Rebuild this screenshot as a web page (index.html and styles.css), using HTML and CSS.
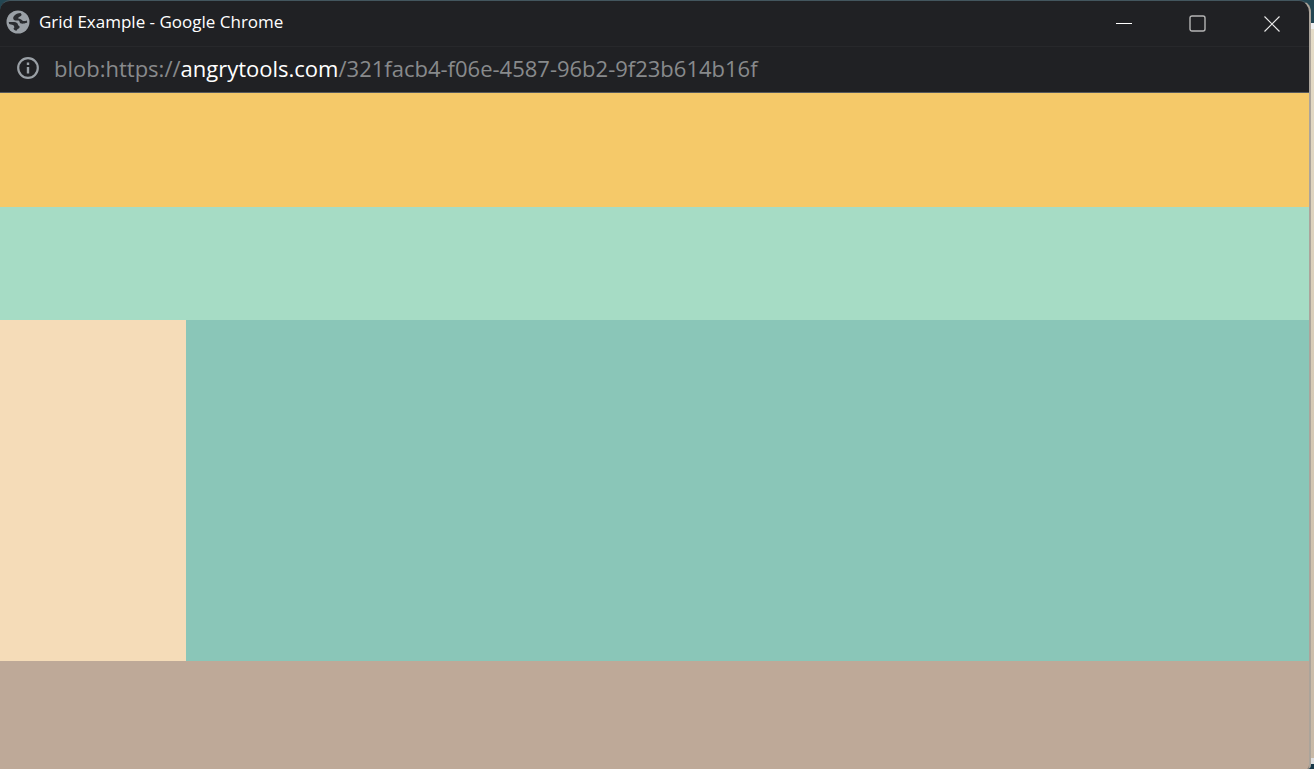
FILE: index.html
```html
<!DOCTYPE html>
<html lang="en">
<head>
<meta charset="utf-8">
<title>Grid Example</title>
<link rel="stylesheet" href="styles.css">
</head>
<body class="desktop">
<div class="window">
  <header class="titlebar">
    <svg class="favicon" viewBox="0 0 24 24" aria-hidden="true">
      <circle cx="12" cy="12" r="11.5" fill="#9aa0a6"/>
      <path d="M14.5 3 C12 3 9.5 4.2 8 6 C6.6 7.7 7 10 9 10.4 L12.6 10.6 C13.8 11 13.3 13.2 15 13.6 C17 14 18.5 13.5 21.2 12.8 L21 10.4 C18.8 11 17.3 11.2 16.3 10.4 C15.4 9.2 14.2 8.6 12.2 8.4 C12.2 6.8 15.6 6.6 15.6 4.6 Z" fill="#2b2d31"/>
      <path d="M2.8 12 L8 12 C10.6 12.2 12 13.3 12 15 C12.2 16 13.8 15.6 13.6 17.2 C13.2 18.8 11.4 18.4 10.6 20.8 C8.8 20.4 7.8 19.6 7.4 18.8 C8.8 18 8.4 16.2 7.4 15.2 C5.8 14.6 4 14.8 3 13.8 Z" fill="#2b2d31"/>
    </svg>
    <h1 class="title">Grid Example - Google Chrome</h1>
    <div class="controls">
      <button class="control" type="button" aria-label="Minimize"><svg class="control-icon" viewBox="0 0 18 18"><path d="M1 8.5H17" stroke="#fff"/></svg></button>
      <button class="control" type="button" aria-label="Maximize"><svg class="control-icon" viewBox="0 0 18 18"><rect x="1" y="1" width="15" height="15" rx="2" fill="none" stroke="#b5b5b5" stroke-width="1.4"/></svg></button>
      <button class="control" type="button" aria-label="Close"><svg class="control-icon" viewBox="0 0 18 18"><path d="M1.5 1.5L16.5 16.5M16.5 1.5L1.5 16.5" stroke="#e6e6e6" stroke-width="1.2"/></svg></button>
    </div>
  </header>
  <div class="addressbar">
    <button class="info" type="button" aria-label="View site information">
      <svg class="info-icon" viewBox="0 0 24 24"><circle cx="12" cy="12" r="9.8" fill="none" stroke="#9aa0a6" stroke-width="2.2"/><path d="M12 6.5V9M12 11V17.5" stroke="#9aa0a6" stroke-width="2.4"/></svg>
    </button>
    <div class="url">blob:https://<span class="host">angrytools.com</span>/321facb4-f06e-4587-96b2-9f23b614b16f</div>
  </div>
  <main class="grid">
    <section class="header"></section>
    <nav class="menu"></nav>
    <aside class="sidebar"></aside>
    <article class="content"></article>
    <footer class="footer"></footer>
  </main>
</div>
</body>
</html>
```

FILE: styles.css
```css
* {
  box-sizing: border-box;
}

.desktop {
  margin: 0;
  height: 100vh;
  padding-right: 3px;
  overflow: hidden;
  font-family: "Segoe UI", "Open Sans", "Noto Sans", sans-serif;
  background: linear-gradient(#234652 0 23px, #efefef 23px 29px, #e5dcc7 29px, #c8b9a6 calc(100% - 11px), #dedede calc(100% - 11px) calc(100% - 5px), #183848 calc(100% - 5px));
}

.window {
  display: flex;
  flex-direction: column;
  height: 100%;
  overflow: hidden;
  background: #202124;
  border-top: 1px solid #43565e;
  border-right: 2px solid #aba49b;
  border-radius: 10px 12px 4px 0;
}

.titlebar {
  display: flex;
  align-items: center;
  height: 46px;
  padding-left: 6px;
  border-bottom: 1px solid #27282b;
}

.favicon {
  width: 24px;
  height: 24px;
  margin-bottom: 4px;
}

.title {
  flex: 1;
  margin: 0 0 4px 9px;
  color: #fff;
  font-size: 17px;
  font-weight: 400;
  line-height: 24px;
  white-space: nowrap;
}

.controls {
  display: flex;
  height: 100%;
}

.control {
  display: grid;
  place-items: center;
  width: 74px;
  padding: 0;
  border: 0;
  background: none;
}

.control-icon {
  width: 18px;
  height: 18px;
}

.addressbar {
  display: flex;
  align-items: center;
  gap: 14px;
  height: 46px;
  padding: 0 0 3px 16px;
  border-bottom: 1px solid #55595c;
}

.info {
  display: flex;
  padding: 0;
  border: 0;
  background: none;
}

.info-icon {
  width: 24px;
  height: 24px;
}

.url {
  color: #888a8c;
  font-size: 22px;
  line-height: 30px;
  white-space: nowrap;
}

.host {
  color: #fff;
}

.grid {
  flex: 1;
  display: grid;
  grid-template-columns: 186fr 1123fr;
  grid-template-rows: 114fr 113fr 341fr 108fr;
}

.header {
  grid-column: 1 / -1;
  background: #f5c969;
}

.menu {
  grid-column: 1 / -1;
  background: #a6dcc5;
}

.sidebar {
  background: #f5dcb8;
}

.content {
  background: #8ac6b8;
}

.footer {
  grid-column: 1 / -1;
  background: #bea998;
}
```
